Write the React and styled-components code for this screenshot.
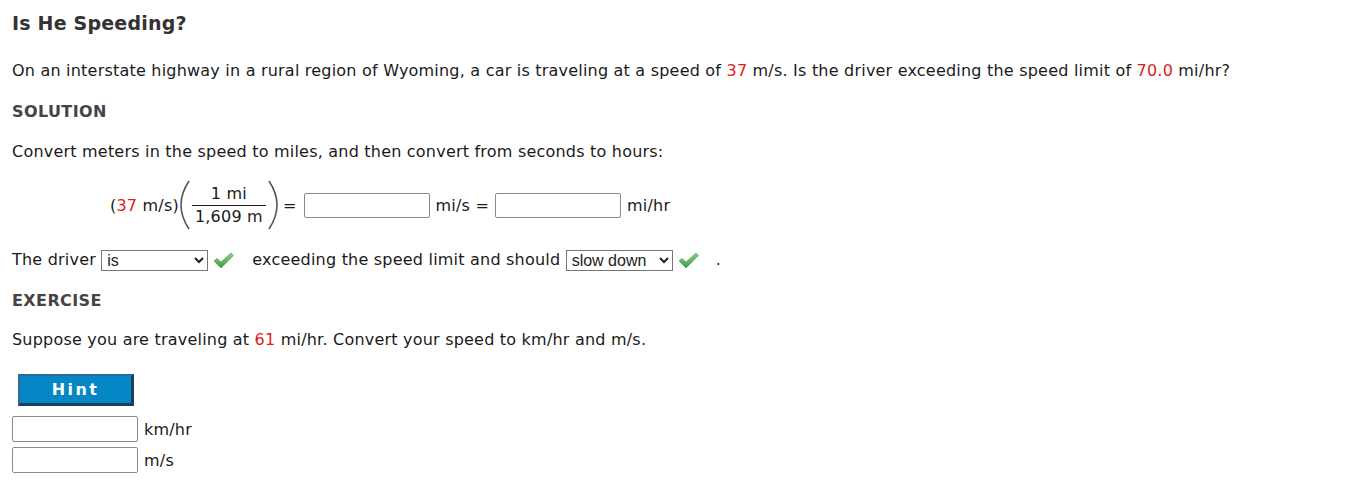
import React from 'react';
import styled, { createGlobalStyle } from 'styled-components';

const Global = createGlobalStyle`
  html, body {
    margin: 0;
    padding: 0;
    background: #ffffff;
  }
  body {
    font-family: "DejaVu Sans", Verdana, sans-serif;
    font-size: 16px;
    letter-spacing: 0.21px;
    color: #1a1a1a;
  }
`;

const Page = styled.div`
  display: flex;
  flex-direction: column;
  align-items: flex-start;
  padding: 11px 12px 0 12px;
`;

const Title = styled.h1`
  margin: 0;
  font-size: 19px;
  line-height: 24px;
  font-weight: bold;
  letter-spacing: 0.2px;
  color: #333333;
`;

const Heading = styled.h2`
  margin: ${({ top }) => top}px 0 0 0;
  font-size: 16px;
  line-height: 24px;
  font-weight: bold;
  letter-spacing: 0.4px;
  color: #444444;
`;

const Text = styled.p`
  margin: ${({ top }) => top}px 0 0 0;
  line-height: 24px;
`;

const Red = styled.span`
  color: #e01b1b;
`;

const EqRow = styled.div`
  display: flex;
  align-items: center;
  margin: ${({ top }) => top}px 0 0 98px;
  height: 50px;
`;

const Fraction = styled.span`
  display: inline-flex;
  flex-direction: column;
  align-items: center;
  margin: 0 1px;
`;

const Num = styled.span`
  line-height: 22px;
  padding: 0 3px;
`;

const Den = styled.span`
  line-height: 22px;
  padding: 0 3px;
  border-top: 1px solid #1a1a1a;
`;

const Paren = styled.svg`
  width: 12px;
  height: 50px;
  display: block;
`;

const Equals = styled.span`
  margin: 0 7px 0 4px;
`;

const Input = styled.input`
  box-sizing: border-box;
  width: 126px;
  height: ${({ h }) => h || 25}px;
  border: 1px solid #8a8a8a;
  border-radius: 2px;
  margin: 0 6px 0 ${({ ml }) => ml || 0}px;
  padding: 0;
`;

const Row = styled.div`
  display: flex;
  align-items: center;
  margin-top: ${({ top }) => top}px;
  line-height: 24px;
`;

const Select = styled.select`
  box-sizing: border-box;
  height: 21px;
  width: ${({ w }) => w}px;
  font-family: "Liberation Sans", Arial, sans-serif;
  font-size: 16px;
  letter-spacing: 0;
  color: #222;
  border: 1px solid #767676;
  border-radius: 0;
  background: #fff;
  padding: 0 1px;
  margin: 0 5px 0 ${({ ml }) => ml || 0}px;
`;

const Check = styled.svg`
  width: 21px;
  height: 18px;
  display: block;
  margin-right: ${({ mr }) => mr}px;
`;

const HintButton = styled.button`
  margin: 22px 0 0 6px;
  width: 116px;
  height: 32px;
  background: #0487c4;
  color: #ffffff;
  font-family: "DejaVu Sans", Verdana, sans-serif;
  font-weight: bold;
  font-size: 16px;
  letter-spacing: 2.4px;
  border-style: solid;
  border-width: 2px 3px 3px 2px;
  border-color: #2b6a99 #1c3f5e #1c3f5e #2b6a99;
  cursor: pointer;
`;

const AnswerRow = styled.div`
  display: flex;
  align-items: center;
  margin-top: ${({ top }) => top}px;
`;

const CheckMark = ({ mr }) => (
  <Check viewBox="0 0 21 18" mr={mr}>
    <defs>
      <linearGradient id="cg" x1="0" y1="0" x2="0" y2="1">
        <stop offset="0" stopColor="#8fd18f" />
        <stop offset="1" stopColor="#3f9a3f" />
      </linearGradient>
    </defs>
    <path d="M1 10 L4 7.5 L8 11 L18 2 L20.5 4.5 L8 17 Z" fill="url(#cg)" stroke="#4a9e4a" strokeWidth="0.6" />
  </Check>
);

const LeftParen = () => (
  <Paren viewBox="0 0 12 50">
    <path d="M10 1 Q2 13 2 25 Q2 37 10 49" fill="none" stroke="#555" strokeWidth="1.6" />
  </Paren>
);

const RightParen = () => (
  <Paren viewBox="0 0 12 50">
    <path d="M2 1 Q10 13 10 25 Q10 37 2 49" fill="none" stroke="#555" strokeWidth="1.6" />
  </Paren>
);

export default function App() {
  return (
    <Page>
      <Global />
      <Title>Is He Speeding?</Title>
      <Text top={24}>
        On an interstate highway in a rural region of Wyoming, a car is traveling at a speed of <Red>37</Red> m/s. Is the driver exceeding the speed limit of <Red>70.0</Red> mi/hr?
      </Text>
      <Heading top={17}>SOLUTION</Heading>
      <Text top={16}>Convert meters in the speed to miles, and then convert from seconds to hours:</Text>
      <EqRow top={16}>
        <span>(<Red>37</Red> m/s)</span>
        <LeftParen />
        <Fraction>
          <Num>1 mi</Num>
          <Den>1,609 m</Den>
        </Fraction>
        <RightParen />
        <Equals>=</Equals>
        <Input />
        <span>mi/s =</span>
        <Input ml={6} />
        <span>mi/hr</span>
      </EqRow>
      <Row top={18}>
        The driver&nbsp;
        <Select w={107} defaultValue="is">
          <option value="is">is</option>
          <option value="isnot">is not</option>
        </Select>
        <CheckMark mr={18} />
        exceeding the speed limit and should&nbsp;
        <Select w={107} defaultValue="slow">
          <option value="slow">slow down</option>
          <option value="ok">keep going</option>
        </Select>
        <CheckMark mr={17} />
        .
      </Row>
      <Heading top={17}>EXERCISE</Heading>
      <Text top={15}>
        Suppose you are traveling at <Red>61</Red> mi/hr. Convert your speed to km/hr and m/s.
      </Text>
      <HintButton>Hint</HintButton>
      <AnswerRow top={10}>
        <Input h={26} />
        <span>km/hr</span>
      </AnswerRow>
      <AnswerRow top={5}>
        <Input h={26} />
        <span>m/s</span>
      </AnswerRow>
    </Page>
  );
}
